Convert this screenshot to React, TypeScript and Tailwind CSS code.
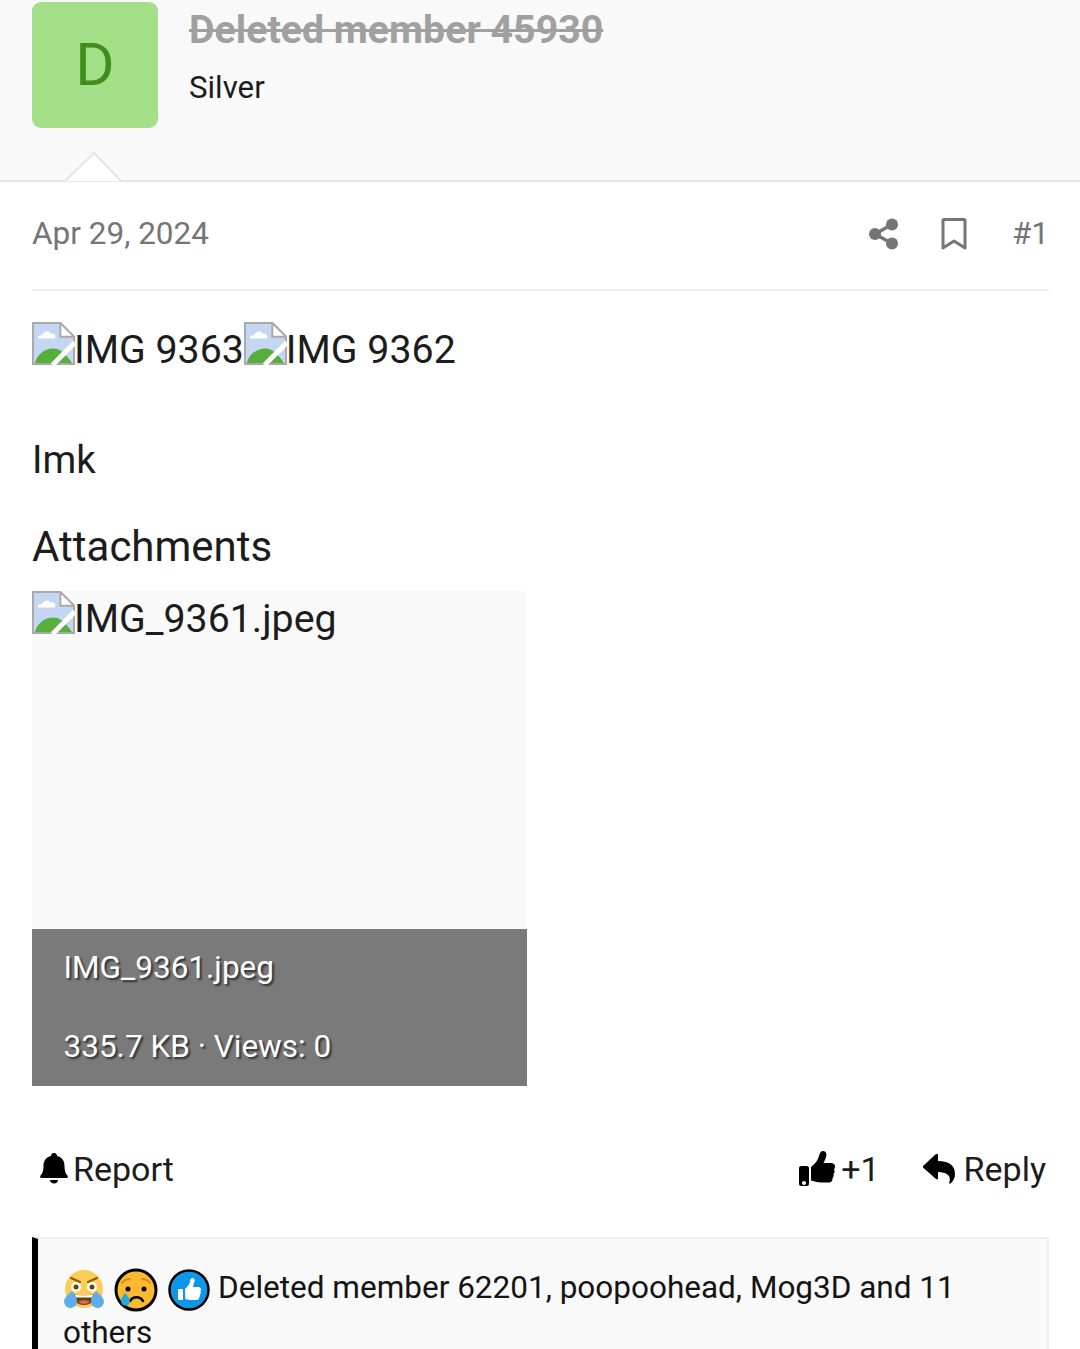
import React from "react";

function Broken() {
  return (
    <svg width="43" height="43" viewBox="0 0 44 44" className="shrink-0 -mr-[1px]">
      <path d="M1 1H29L43 15V43H1Z" fill="#c5d6f3" stroke="#a9a9a9" strokeWidth="2" />
      <path d="M29 1V15H43Z" fill="#fff" stroke="#a9a9a9" strokeWidth="2" strokeLinejoin="round" />
      <path d="M6 16c0-2 2-3 4-2 1-4 7-6 9-2 3-1 5 1 5 3 0 2-1 2-2 2H7c-1 0-1 0-1-1z" fill="#fff" />
      <path d="M3 42c2-9 10-15 19-15 7 0 13 6 19 15Z" fill="#57ae3b" />
      <path d="M21 44 44 21" stroke="#fff" strokeWidth="5" />
    </svg>
  );
}

function Share() {
  return (
    <svg width="30" height="32" viewBox="0 0 30 32">
      <g fill="#757575">
        <circle cx="6" cy="16" r="6" />
        <circle cx="23" cy="6.500" r="6" />
        <circle cx="23" cy="25.500" r="6" />
      </g>
      <path d="M6 16 23 6.500M6 16l17 9.500" stroke="#757575" strokeWidth="3.500" />
    </svg>
  );
}

function Bookmark() {
  return (
    <svg width="26" height="32" viewBox="0 0 26 32">
      <path d="M2 2.500Q2 1.500 3 1.500H23Q24 1.500 24 2.500V30L13 23 2 30Z" fill="none" stroke="#757575" strokeWidth="3" strokeLinejoin="round" />
    </svg>
  );
}

function Bell() {
  return (
    <svg width="28" height="32" viewBox="0 0 28 32">
      <path d="M14 0c1.800 0 3 1.300 3 3 5 1 7.500 5 7.500 9.500 0 6 1.500 8.500 3 10 .8 1 .3 2.500-1 2.500H1.500c-1.300 0-1.800-1.500-1-2.500 1.500-1.500 3-4 3-10C3.500 8 6 4 11 3c0-1.700 1.200-3 3-3Z" fill="#000" />
      <path d="M10 27h8c0 2-1.800 3.500-4 3.500s-4-1.500-4-3.500Z" fill="#000" />
    </svg>
  );
}

function Thumb() {
  return (
    <svg width="36" height="36" viewBox="0 0 36 36">
      <path fillRule="evenodd" d="M2 15h6c1 0 2 1 2 2v16c0 1-1 2-2 2H2c-1 0-2-1-2-2V17c0-1 1-2 2-2Zm3 15a2 2 0 1 0 0 4 2 2 0 0 0 0-4Z" fill="#000" />
      <path d="M12 16c4-3 7-7 8-11 .5-3 2-5 4-5 3 0 4 3 3 6-.5 2-1.500 4-2.500 6H32c2.500 0 4 1.500 4 3.500 0 1.300-.5 2.200-1 3 .8 1 1 3-.5 4.500.5 1.500 0 3-1 4 .3 2.500-1 4.500-4 4.500H22c-4 0-7-1.500-10-2Z" fill="#000" />
    </svg>
  );
}

function ReplyIcon() {
  return (
    <svg width="32" height="30" viewBox="0 0 32 30">
      <path d="M0 12 13 0c.8-.7 2-.2 2 1v6c9 0 17 3 17 13 0 4-2 7.500-4.500 9.500-.8.500-1.600-.2-1.300-1 2-6-.7-10-11.200-10.500V24c0 1.200-1.200 1.700-2 1L0 13.500c-.4-.5-.4-1 0-1.500Z" fill="#000" />
    </svg>
  );
}

function Laugh() {
  return (
    <svg width="42" height="42" viewBox="0 0 42 42">
      <circle cx="21" cy="20" r="19" fill="#fdcb58" />
      <circle cx="13" cy="18" r="5" fill="#fff" />
      <circle cx="29" cy="18" r="5" fill="#fff" />
      <circle cx="13" cy="18" r="2.500" fill="#664500" />
      <circle cx="29" cy="18" r="2.500" fill="#664500" />
      <path d="M8 9 17 13M34 9 25 13" stroke="#8a5a00" strokeWidth="2" strokeLinecap="round" />
      <path d="M10 25c6 1.500 16 1.500 22 0 0 7-4 11-11 11S10 32 10 25Z" fill="#664500" />
      <path d="M12 25.500c5 1 13 1 18 0l-1 3H13Z" fill="#fff" />
      <path d="M15 33c3-2.500 9-2.500 12 0-3 2.500-9 2.500-12 0Z" fill="#e0655a" />
      <path d="M9 22c2 3 5 6 5 10a6.500 6.500 0 0 1-13 1c0-4 4-8 8-11Z" fill="#5dadec" />
      <path d="M33 22c-2 3-5 6-5 10a6.500 6.500 0 0 0 13 1c0-4-4-8-8-11Z" fill="#5dadec" />
    </svg>
  );
}

function Sad() {
  return (
    <svg width="44" height="44" viewBox="0 0 44 44">
      <circle cx="22" cy="22" r="20" fill="#fdb92f" stroke="#000" strokeWidth="3" />
      <circle cx="14" cy="21" r="2.500" fill="#000" />
      <circle cx="30" cy="21" r="2.500" fill="#000" />
      <path d="M8 15c2-3 5-4 8-4M36 15c-2-3-5-4-8-4" stroke="#d98c12" strokeWidth="2" fill="none" strokeLinecap="round" />
      <path d="M16 33c3-5 10-5 13 0" stroke="#000" strokeWidth="2.500" fill="none" strokeLinecap="round" />
      <path d="M11 25c-3 4-4 6-4 8a4.500 4.500 0 0 0 9 0c0-2-2-5-5-8Z" fill="#22a7e0" />
    </svg>
  );
}

function LikeBadge() {
  return (
    <svg width="42" height="42" viewBox="0 0 42 42">
      <circle cx="21" cy="21" r="19.500" fill="#0f97e6" stroke="#000" strokeWidth="2.500" />
      <rect x="10" y="20" width="5" height="11" rx="1" fill="#fff" />
      <path d="M17 20c2-2 4-4 5-7 0-3 1-4 3-4 2 .5 2 3 1 5l-1 4h5c2 0 3 1 3 2.500 0 1-.3 1.500-.7 2 .7 1 .7 2-.3 3 .3 1 0 2-.7 2.500 0 2-1 3-3 3h-6c-2 0-4-1-5-1Z" fill="#fff" />
    </svg>
  );
}

export default function App() {
  return (
    <div className="h-[1349px] overflow-hidden bg-white text-[#141414] font-['Roboto',sans-serif]">
      <header className="relative h-[182px] bg-[#f9f9f9] border-b-2 border-[#e6e6e6] flex pl-8 pt-[2px]">
        <div className="w-[126px] h-[126px] rounded-[9px] bg-[#a3e087] text-[#3f8f1e] flex items-center justify-center text-[60px] leading-none">D</div>
        <div className="ml-[31px]">
          <div className="text-[39.300px] font-bold leading-[56px] text-[#a0a0a0] line-through">Deleted member 45930</div>
          <div className="text-[31.200px] leading-[46px] mt-[7px] text-[#1c1c1c]">Silver</div>
        </div>
        <svg width="60" height="31" viewBox="0 0 60 31" className="absolute left-[64px] top-[151px]">
          <path d="M0 30 30 1 58 30Z" fill="#fff" />
          <path d="M0 31 30 2 58 31" fill="none" stroke="#e6e6e6" strokeWidth="2" />
        </svg>
      </header>

      <div className="mx-8 w-[1017px] h-[109px] border-b-2 border-[#eeeeee] flex items-center text-[#757575] text-[31.500px] pb-[4px]">
        <span className="flex-1">Apr 29, 2024</span>
        <Share />
        <span className="ml-[42px]"><Bookmark /></span>
        <span className="ml-[45px]">#1</span>
      </div>

      <div className="mx-8 mt-[29px] flex items-center text-[39.300px] leading-[60px] text-[#1c1c1c]">
        <span className="mb-[14px]"><Broken /></span><span>IMG 9363</span>
        <span className="mb-[14px]"><Broken /></span><span>IMG 9362</span>
      </div>

      <p className="mx-8 mt-[50px] text-[38.500px] leading-[60px] text-[#1c1c1c]">Imk</p>

      <h2 className="mx-8 mt-[27px] text-[42px] leading-[60px] text-[#1c1c1c]">Attachments</h2>

      <div className="ml-8 mt-[14px] w-[495px] h-[495px] bg-[#f9f9f9] flex flex-col justify-between">
        <div className="flex items-start text-[39.300px] leading-[56px] text-[#1c1c1c]">
          <Broken /><span>IMG_9361.jpeg</span>
        </div>
        <div className="h-[157px] bg-[#7a7a7a] px-[31.500px] pt-[15px] text-white text-[31.500px] leading-[48px] [text-shadow:2px_2px_2px_rgba(0,0,0,0.6)]">
          <div>IMG_9361.jpeg</div>
          <div className="mt-[31px]">335.7 KB · Views: 0</div>
        </div>
      </div>

      <div className="mx-8 mt-[58px] w-[1017px] flex items-center text-[34px] leading-[50px] text-[#1c1c1c]">
        <span className="ml-[8px]"><Bell /></span>
        <span className="ml-[5px] flex-1">Report</span>
        <Thumb />
        <span className="ml-[6px]">+1</span>
        <span className="ml-[43px]"><ReplyIcon /></span>
        <span className="ml-[9px] mr-[3px]">Reply</span>
      </div>

      <div className="ml-8 mt-[43px] w-[1017px] h-[200px] bg-[#f9f9f9] border-[2px] border-[#eeeeee] border-l-[6px] border-l-black pl-[25px] pt-[26px] pr-[60px] text-[31.500px] leading-[45px] text-[#141414]">
        <div className="flex items-center">
          <span className="translate-y-[2px]"><Laugh /></span>
          <span className="ml-[10px] translate-y-[2px] -translate-x-[1px]"><Sad /></span>
          <span className="ml-[10px] translate-y-[2px] -translate-x-[1px]"><LikeBadge /></span>
          <span className="ml-[7px] whitespace-nowrap">Deleted member 62201, poopoohead, Mog3D and 11</span>
        </div>
        <div>others</div>
      </div>
    </div>
  );
}
